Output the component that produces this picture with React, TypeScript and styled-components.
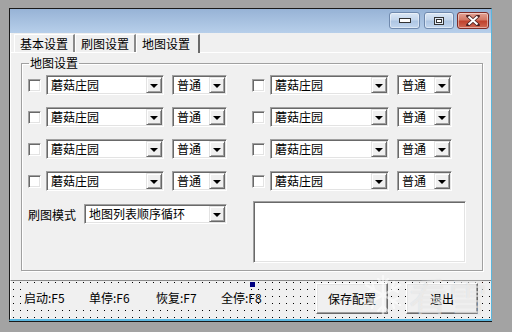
import React from "react";
import styled, { createGlobalStyle } from "styled-components";

const GlobalStyle = createGlobalStyle`
  html, body {
    margin: 0;
    padding: 0;
    background: #a3a3a3;
    width: 512px;
    height: 332px;
    overflow: hidden;
  }
  body {
    font-family: "Noto Sans CJK SC", "DejaVu Sans", sans-serif;
    font-size: 12px;
    color: #000;
  }
`;

const Window = styled.div`
  position: relative;
  margin: 8px 0 0 9px;
  width: 483px;
  height: 313px;
  box-sizing: border-box;
  border-top: 1px solid #1a1a1a;
  border-left: 1px solid #1a1a1a;
  border-right: 1px solid #5ab6de;
  border-bottom: 2px solid #5ab6de;
  box-shadow: 0 1px 0 #1a1a1a;
  background: #f0f0f0;
  display: flex;
  flex-direction: column;
  overflow: hidden;
`;

const TitleBar = styled.div`
  height: 24px;
  flex: none;
  background: linear-gradient(#97b3d6, #b7cfea);
  display: flex;
  justify-content: flex-end;
  align-items: flex-start;
  padding: 3px 2px 0 0;
  box-sizing: border-box;
  gap: 3px;
`;

const CaptionButton = styled.div<{ $close?: boolean; $w: number }>`
  width: ${({ $w }) => $w}px;
  height: 17px;
  box-sizing: border-box;
  border-radius: 3px;
  border: 1px solid ${({ $close }) => ($close ? "#7d2b26" : "#6f89ad")};
  background: ${({ $close }) =>
    $close
      ? "linear-gradient(#e3a295 0%, #d37865 45%, #c0422d 55%, #d06a55 100%)"
      : "linear-gradient(#dbe7f5 0%, #c4d6ec 45%, #aec6e3 55%, #c2d6ee 100%)"};
  box-shadow: inset 0 0 0 1px rgba(255, 255, 255, 0.45);
  display: flex;
  align-items: center;
  justify-content: center;
`;

const TabStrip = styled.div`
  height: 19px;
  flex: none;
  display: flex;
  align-items: flex-end;
  padding-left: 3px;
  border-left: 1px solid #fff;
`;

const Tab = styled.div<{ $active?: boolean }>`
  height: ${({ $active }) => ($active ? 19 : 18)}px;
  box-sizing: border-box;
  padding: 0 ${({ $active }) => ($active ? 8 : 5)}px 0 5px;
  line-height: 17px;
  font-size: 12px;
  border-left: 1px solid #fff;
  border-top: 1px solid #fff;
  border-right: 2px solid;
  border-right-color: ${({ $active }) => ($active ? "#6a6a6a" : "#8a8a8a")};
  position: relative;
  top: ${({ $active }) => ($active ? 1 : 0)}px;
  background: #f0f0f0;
  z-index: ${({ $active }) => ($active ? 1 : 0)};
`;

const TabPanel = styled.div`
  height: 229px;
  flex: none;
  box-sizing: border-box;
  border-top: 1px solid #fff;
  border-left: 1px solid #fff;
  border-bottom: 1px solid #8a8a8a;
  padding: 3px 7px 0 10px;
`;

const GroupBox = styled.fieldset`
  margin: 0;
  padding: 5px 0 0 6px;
  width: 462px;
  height: 215px;
  box-sizing: border-box;
  border: 1px solid #a0a0a0;
  box-shadow: inset 1px 1px 0 #fff, 1px 1px 0 #fff;
  min-width: 0;

  legend {
    padding: 0 1px;
    margin-left: 1px;
    font-size: 12px;
    line-height: 14px;
  }
`;

const MapGrid = styled.div`
  display: grid;
  grid-template-columns: 199px 214px;
  column-gap: 25px;
  row-gap: 12px;
`;

const MapRow = styled.div`
  display: flex;
  align-items: center;
  height: 20px;
`;

const CheckBox = styled.div`
  width: 13px;
  height: 13px;
  box-sizing: border-box;
  background: #fff;
  border: 1px solid;
  border-color: #a0a0a0 #fff #fff #a0a0a0;
  box-shadow: inset 1px 1px 0 #696969, inset -1px -1px 0 #e3e3e3;
  margin-right: 5px;
  flex: none;
`;

const Combo = styled.div<{ $w: number; $ml?: number }>`
  width: ${({ $w }) => $w}px;
  margin-left: ${({ $ml }) => $ml ?? 0}px;
  height: 20px;
  box-sizing: border-box;
  background: #fff;
  border: 1px solid;
  border-color: #a0a0a0 #fff #fff #a0a0a0;
  box-shadow: inset 1px 1px 0 #696969, inset -1px -1px 0 #e3e3e3;
  padding: 1px;
  display: flex;
  align-items: center;
  flex: none;
`;

const ComboText = styled.span`
  flex: 1;
  padding-left: 3px;
  font-size: 12px;
  line-height: 16px;
  white-space: nowrap;
  overflow: hidden;
`;

const DropButton = styled.div`
  width: 16px;
  height: 16px;
  box-sizing: border-box;
  background: #f0f0f0;
  border: 1px solid;
  border-color: #e3e3e3 #696969 #696969 #e3e3e3;
  box-shadow: inset 1px 1px 0 #fff, inset -1px -1px 0 #a0a0a0;
  display: flex;
  align-items: center;
  justify-content: center;
  flex: none;

  &::after {
    content: "";
    width: 0;
    height: 0;
    border-left: 4px solid transparent;
    border-right: 4px solid transparent;
    border-top: 4px solid #000;
    margin-top: 1px;
  }
`;

const BottomRow = styled.div`
  display: flex;
  margin-top: 10px;
`;

const ModeCell = styled.div`
  width: 199px;
  display: flex;
  align-items: center;
  padding-top: 3px;
  align-self: flex-start;
  gap: 8px;
`;

const ListBox = styled.div`
  margin-left: 26px;
  width: 213px;
  height: 62px;
  box-sizing: border-box;
  background: #fff;
  border: 1px solid;
  border-color: #a0a0a0 #fff #fff #a0a0a0;
  box-shadow: inset 1px 1px 0 #696969, inset -1px -1px 0 #e3e3e3;
`;

const Frame = styled.div`
  position: relative;
  flex: 1;
  display: flex;
  align-items: flex-start;
  padding: 2px 0 0 12px;
  background-color: #f0f0f0;
  background-image: conic-gradient(at 1px 1px, transparent 75%, #000 0);
  background-size: 7px 7px;
  background-position: 2px 1px;
  border-left: 1px solid #fff;
`;

const StatusLabel = styled.div`
  width: 228px;
  height: 26px;
  margin-top: 1px;
  background: #f0f0f0;
  display: grid;
  grid-template-columns: 65px 67px 65px auto;
  align-items: center;
  padding-left: 1px;
  box-sizing: border-box;
  font-size: 12px;
  white-space: nowrap;
`;

const Handle = styled.div`
  position: absolute;
  left: 239px;
  top: 1px;
  width: 5px;
  height: 5px;
  background: #000080;
`;

const PushButton = styled.div<{ $gap: number }>`
  width: 72px;
  height: 31px;
  margin-left: ${({ $gap }) => $gap}px;
  box-sizing: border-box;
  background: #f0f0f0;
  border: 1px solid;
  border-color: #fff #696969 #696969 #fff;
  box-shadow: inset -1px -1px 0 #a0a0a0, inset 1px 1px 0 #e3e3e3;
  display: flex;
  align-items: center;
  justify-content: center;
  font-size: 12px;
`;

/* faint site watermark burned into the screenshot */
const Watermark = styled.div`
  position: absolute;
  right: 2px;
  bottom: 2px;
  display: flex;
  align-items: center;
  gap: 4px;
  pointer-events: none;
  color: rgba(255, 255, 255, 0.5);
  font-size: 38px;
  line-height: 44px;
  letter-spacing: 2px;
  font-family: "Noto Sans CJK SC", sans-serif;
  text-shadow: 0 0 1px rgba(110, 110, 110, 0.22);
`;

const Snowflake = () => (
  <svg width="44" height="44" viewBox="0 0 44 44" style={{ opacity: 0.55 }}>
    <g stroke="#fff" strokeWidth="2.4" fill="none" strokeLinecap="round">
      <path d="M22 3 V41 M5 12 L39 32 M39 12 L5 32" />
      <path d="M17 6 L22 11 L27 6 M17 38 L22 33 L27 38" />
      <path d="M7 19 L13 16 L11 9 M37 25 L31 28 L33 35" />
      <path d="M37 19 L31 16 L33 9 M7 25 L13 28 L11 35" />
    </g>
  </svg>
);

const rows = [0, 1, 2, 3];

const MapEntry = ({ big }: { big: number }) => (
  <MapRow>
    <CheckBox />
    <Combo $w={big}>
      <ComboText>蘑菇庄园</ComboText>
      <DropButton />
    </Combo>
    <Combo $w={55} $ml={8}>
      <ComboText>普通</ComboText>
      <DropButton />
    </Combo>
  </MapRow>
);

const App = () => {
  return (
    <>
      <GlobalStyle />
      <Window>
        <TitleBar>
          <CaptionButton $w={31} style={{ marginRight: 1 }}>
            <svg width="12" height="5" viewBox="0 0 12 5">
              <rect x="0.5" y="0.5" width="11" height="4" fill="#fff" stroke="#333" />
            </svg>
          </CaptionButton>
          <CaptionButton $w={30}>
            <svg width="10" height="8" viewBox="0 0 10 8">
              <rect x="0.5" y="0.5" width="9" height="7" fill="#dfe8f4" stroke="#333" />
              <rect x="2.5" y="2.5" width="5" height="3" fill="#fff" stroke="#333" />
            </svg>
          </CaptionButton>
          <CaptionButton $w={32} $close>
            <svg width="14" height="11" viewBox="0 0 14 11">
              <path
                d="M2 1 L12 10 M12 1 L2 10"
                stroke="#4a2020"
                strokeWidth="3.6"
                strokeLinecap="round"
                fill="none"
              />
              <path d="M2.5 1.5 L11.5 9.5 M11.5 1.5 L2.5 9.5" stroke="#fff" strokeWidth="2" fill="none" />
            </svg>
          </CaptionButton>
        </TitleBar>

        <TabStrip>
          <Tab>基本设置</Tab>
          <Tab>刷图设置</Tab>
          <Tab $active>地图设置</Tab>
        </TabStrip>

        <TabPanel>
          <GroupBox>
            <legend>地图设置</legend>
            <MapGrid>
              {rows.map((i) => (
                <React.Fragment key={i}>
                  <MapEntry big={118} />
                  <MapEntry big={119} />
                </React.Fragment>
              ))}
            </MapGrid>
            <BottomRow>
              <ModeCell>
                <span>刷图模式</span>
                <Combo $w={143}>
                  <ComboText>地图列表顺序循环</ComboText>
                  <DropButton />
                </Combo>
              </ModeCell>
              <ListBox />
            </BottomRow>
          </GroupBox>
        </TabPanel>

        <Frame>
          <StatusLabel>
            <span>启动:F5</span>
            <span>单停:F6</span>
            <span>恢复:F7</span>
            <span>全停:F8</span>
          </StatusLabel>
          <Handle />
          <PushButton $gap={65}>保存配置</PushButton>
          <PushButton $gap={18}>退出</PushButton>
        </Frame>

        <Watermark>
          <Snowflake />
          看雪
        </Watermark>
      </Window>
    </>
  );
};

export default App;
